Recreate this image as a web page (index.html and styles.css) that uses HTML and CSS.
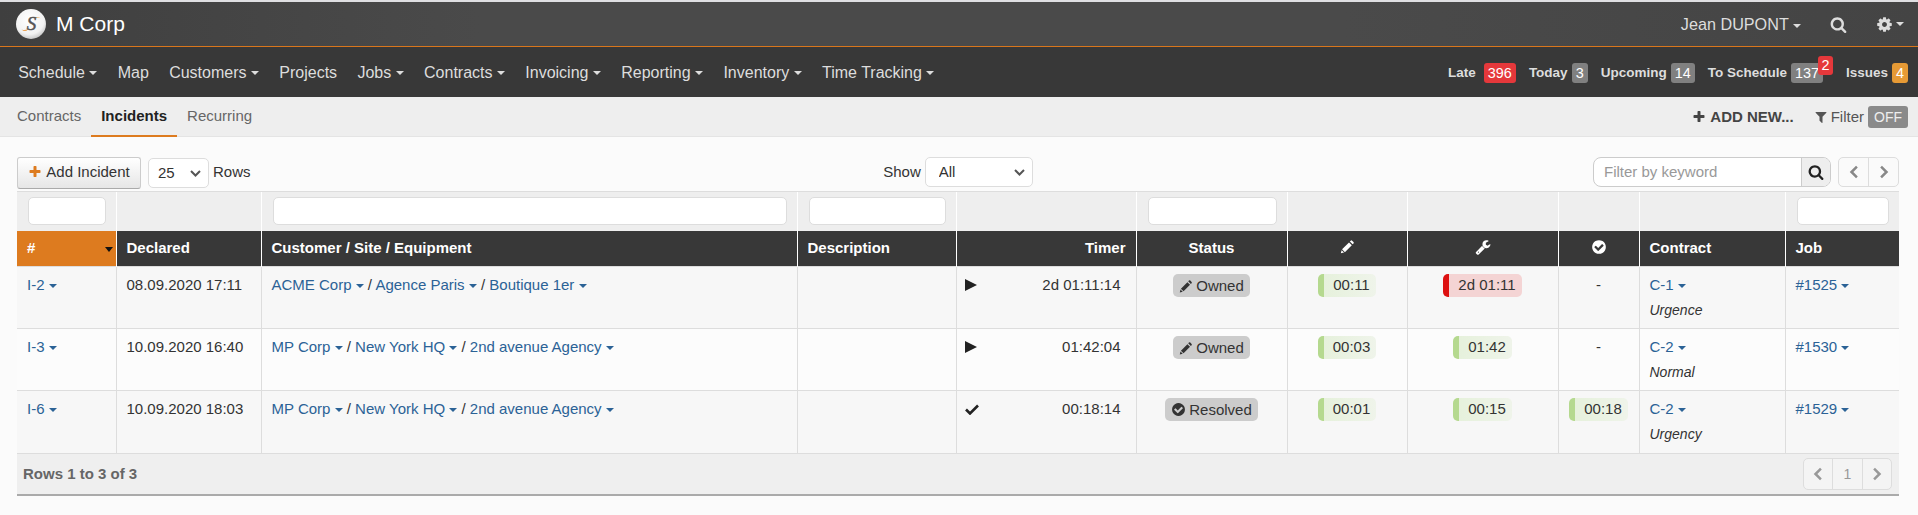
FILE: index.html
```html
<!DOCTYPE html>
<html lang="en">
<head>
<meta charset="utf-8">
<title>Incidents</title>
<link rel="stylesheet" href="styles.css">
</head>
<body>
<svg class="sprite" width="0" height="0" aria-hidden="true">
  <symbol id="i-search" viewBox="0 0 1792 1792"><path d="M1216 832q0-185-131.500-316.500t-316.500-131.500-316.500 131.500-131.500 316.500 131.500 316.500 316.500 131.500 316.500-131.500 131.500-316.500zm512 832q0 52-38 90t-90 38q-54 0-90-38l-343-342q-179 124-399 124-143 0-273.500-55.500t-225-150-150-225-55.500-273.500 55.500-273.500 150-225 225-150 273.500-55.500 273.500 55.500 225 150 150 225 55.500 273.500q0 220-124 399l343 343q37 37 37 90z"/></symbol>
  <symbol id="i-cog" viewBox="0 0 1792 1792"><path d="M1152 896q0-106-75-181t-181-75-181 75-75 181 75 181 181 75 181-75 75-181zm512-109v222q0 12-8 23t-20 13l-185 28q-19 54-39 91 35 50 107 138 10 12 10 25t-9 23q-27 37-99 108t-94 71q-12 0-26-9l-138-108q-44 23-91 38-16 136-29 186-7 28-36 28h-222q-14 0-24.500-8.500t-11.500-21.500l-28-184q-49-16-90-37l-141 107q-10 9-25 9-14 0-25-11-126-114-165-168-7-10-7-23 0-12 8-23 15-21 51-66.500t54-70.500q-27-50-41-99l-183-27q-13-2-21-12.500t-8-23.500v-222q0-12 8-23t19-13l186-28q14-46 39-92-40-57-107-138-10-12-10-24 0-10 9-23 26-36 98.500-107.500t94.500-71.500q13 0 26 10l138 107q44-23 91-38 16-136 29-186 7-28 36-28h222q14 0 24.500 8.500t11.500 21.500l28 184q49 16 90 37l142-107q9-9 24-9 13 0 25 10 129 119 165 170 7 8 7 22 0 12-8 23-15 21-51 66.500t-54 70.500q26 50 41 98l183 28q13 2 21 12.500t8 23.500z"/></symbol>
  <symbol id="i-pencil" viewBox="0 0 16 16"><path d="M9.600 3.600l3 3-7.400 7.400-3-3zM10.500 2.700l.9-.9a1.100 1.100 0 0 1 1.500 0l1.500 1.500a1.100 1.100 0 0 1 0 1.500l-.9.900zM1.700 11.900l2.600 2.600-3.400.8z"/></symbol>
  <symbol id="i-wrench" viewBox="0 0 1792 1792"><path d="M448 1472q0-26-19-45t-45-19-45 19-19 45 19 45 45 19 45-19 19-45zm644-420l-682 682q-37 37-90 37-52 0-91-37l-106-108q-38-36-38-90 0-53 38-91l681-681q39 98 114.500 173.500t173.500 114.500zm634-435q0 39-23 106-47 134-164.500 217.500t-258.500 83.500q-185 0-316.500-131.500t-131.500-316.500 131.500-316.500 316.500-131.500q58 0 121.500 16.500t107.500 46.500q16 11 16 28t-16 28l-293 169v224l193 107q5-3 79-48.500t135.500-81 70.500-35.500q15 0 23.500 10t8.500 25z"/></symbol>
  <symbol id="i-check" viewBox="0 0 1792 1792"><path d="M1412 734q0-28-18-46l-91-90q-19-19-45-19t-45 19l-408 407-226-226q-19-19-45-19t-45 19l-91 90q-18 18-18 46 0 27 18 45l362 362q19 19 45 19 27 0 46-19l543-543q18-18 18-45zm252 162q0 209-103 385.500t-279.500 279.500-385.500 103-385.500-103-279.500-279.500-103-385.500 103-385.500 279.500-279.500 385.500-103 385.500 103 279.500 279.500 103 385.500z"/></symbol>
  <symbol id="i-plus" viewBox="0 0 1792 1792"><path d="M1600 736v192q0 40-28 68t-68 28h-416v416q0 40-28 68t-68 28h-192q-40 0-68-28t-28-68v-416h-416q-40 0-68-28t-28-68v-192q0-40 28-68t68-28h416v-416q0-40 28-68t68-28h192q40 0 68 28t28 68v416h416q40 0 68 28t28 68z"/></symbol>
  <symbol id="i-filter" viewBox="0 0 1792 1792"><path d="M1595 295q17 41-14 70l-493 493v742q0 42-39 59-13 5-25 5-27 0-45-19l-256-256q-19-19-19-45v-486l-493-493q-31-29-14-70 17-39 59-39h1280q42 0 59 39z"/></symbol>
  <symbol id="i-left" viewBox="0 0 12 16"><path d="M9.500 1.500 3 8l6.500 6.500" fill="none" stroke="currentColor" stroke-width="3"/></symbol>
  <symbol id="i-right" viewBox="0 0 12 16"><path d="M2.500 1.500 9 8l-6.500 6.500" fill="none" stroke="currentColor" stroke-width="3"/></symbol>
  <symbol id="i-play" viewBox="0 0 12 12"><path d="M0 0l12 6-12 6z"/></symbol>
  <symbol id="i-ok" viewBox="0 0 14 12"><path d="M1 6.500l4 4 8-8" fill="none" stroke="currentColor" stroke-width="2.600"/></symbol>
</svg>

<header class="topbar">
  <div class="brand">
    <svg class="logo" viewBox="0 0 30 30" aria-hidden="true">
      <defs><radialGradient id="lg" cx="45%" cy="35%" r="70%"><stop offset="0" stop-color="#fff"/><stop offset=".7" stop-color="#f2f2f2"/><stop offset="1" stop-color="#bcbcbc"/></radialGradient></defs>
      <circle cx="15" cy="15" r="15" fill="url(#lg)"/>
      <path d="M5.500 20.500c2.500 1 4.500.6 7-.6-1.800 2.300-4.800 2.700-7 .6z" fill="#e8871e"/>
      <path d="M24.500 9.200c-2-.6-4-.5-6 .2 1.800-1.400 4.500-1.500 6-.2z" fill="#e8871e"/>
      <text x="15.500" y="20.500" class="logo-s">S</text>
    </svg>
    <span class="brand-name">M Corp</span>
  </div>
  <div class="top-right">
    <span class="user">Jean DUPONT <i class="caret"></i></span>
    <svg class="ico ico-top"><use href="#i-search"/></svg>
    <span class="gear"><svg class="ico ico-top"><use href="#i-cog"/></svg><i class="caret"></i></span>
  </div>
</header>

<nav class="mainnav">
  <ul class="menu">
    <li>Schedule <i class="caret"></i></li>
    <li>Map</li>
    <li>Customers <i class="caret"></i></li>
    <li>Projects</li>
    <li>Jobs <i class="caret"></i></li>
    <li>Contracts <i class="caret"></i></li>
    <li>Invoicing <i class="caret"></i></li>
    <li>Reporting <i class="caret"></i></li>
    <li>Inventory <i class="caret"></i></li>
    <li>Time Tracking <i class="caret"></i></li>
  </ul>
  <div class="counters">
    <span class="counter counter-late">Late <b class="badge badge-red">396</b></span>
    <span class="counter">Today <b class="badge">3</b></span>
    <span class="counter">Upcoming <b class="badge">14</b></span>
    <span class="counter">To Schedule <b class="badge">137<em class="badge-over">2</em></b></span>
    <span class="counter counter-issues">Issues <b class="badge badge-orange">4</b></span>
  </div>
</nav>

<div class="subnav">
  <div class="tabs">
    <a class="tab">Contracts</a>
    <a class="tab tab-active">Incidents</a>
    <a class="tab">Recurring</a>
  </div>
  <div class="subnav-right">
    <span class="addnew"><svg class="ico ico-plus"><use href="#i-plus"/></svg>ADD NEW...</span>
    <span class="filter"><svg class="ico ico-filter"><use href="#i-filter"/></svg>Filter</span>
    <span class="off">OFF</span>
  </div>
</div>

<main class="content">
  <div class="toolbar">
    <div class="tb-left">
      <button class="btn-add" type="button"><svg class="ico ico-add"><use href="#i-plus"/></svg>Add Incident</button>
      <select class="sel sel-rows"><option>25</option></select>
      <span class="tb-label">Rows</span>
    </div>
    <div class="tb-mid">
      <span class="tb-label">Show</span>
      <select class="sel sel-show"><option>All</option></select>
    </div>
    <div class="tb-right">
      <div class="search">
        <input class="search-input" placeholder="Filter by keyword">
        <span class="search-btn"><svg class="ico ico-sb"><use href="#i-search"/></svg></span>
      </div>
      <div class="pager pager-top">
        <span class="pg"><svg class="ico ico-chev"><use href="#i-left"/></svg></span>
        <span class="pg"><svg class="ico ico-chev"><use href="#i-right"/></svg></span>
      </div>
    </div>
  </div>

  <table class="grid">
    <colgroup>
      <col class="c1"><col class="c2"><col class="c3"><col class="c4"><col class="c5"><col class="c6"><col class="c7"><col class="c8"><col class="c9"><col class="c10"><col class="c11">
    </colgroup>
    <thead>
      <tr class="filters">
        <td><input class="fi"></td><td></td><td><input class="fi"></td><td><input class="fi"></td><td></td><td><input class="fi"></td><td></td><td></td><td></td><td></td><td><input class="fi"></td>
      </tr>
      <tr class="heads">
        <th class="sorted">#<i class="sort-caret"></i></th>
        <th>Declared</th>
        <th>Customer / Site / Equipment</th>
        <th>Description</th>
        <th class="ar">Timer</th>
        <th class="ac">Status</th>
        <th class="ac"><svg class="ico ico-th-p"><use href="#i-pencil"/></svg></th>
        <th class="ac"><svg class="ico ico-th"><use href="#i-wrench"/></svg></th>
        <th class="ac"><svg class="ico ico-th"><use href="#i-check"/></svg></th>
        <th>Contract</th>
        <th>Job</th>
      </tr>
    </thead>
    <tbody>
      <tr class="odd">
        <td><a class="lnk">I-2 <i class="caret"></i></a></td>
        <td>08.09.2020 17:11</td>
        <td><a class="lnk">ACME Corp <i class="caret"></i></a> / <a class="lnk">Agence Paris <i class="caret"></i></a> / <a class="lnk">Boutique 1er <i class="caret"></i></a></td>
        <td></td>
        <td class="timer"><div class="timer-in"><svg class="ico ico-play"><use href="#i-play"/></svg><span>2d 01:11:14</span></div></td>
        <td class="ac"><span class="status"><svg class="ico ico-st"><use href="#i-pencil"/></svg>Owned</span></td>
        <td class="ac"><span class="tm">00:11</span></td>
        <td class="ac"><span class="tm tm-red">2d 01:11</span></td>
        <td class="ac">-</td>
        <td><a class="lnk">C-1 <i class="caret"></i></a><div class="prio">Urgence</div></td>
        <td><a class="lnk">#1525 <i class="caret"></i></a></td>
      </tr>
      <tr class="even">
        <td><a class="lnk">I-3 <i class="caret"></i></a></td>
        <td>10.09.2020 16:40</td>
        <td><a class="lnk">MP Corp <i class="caret"></i></a> / <a class="lnk">New York HQ <i class="caret"></i></a> / <a class="lnk">2nd avenue Agency <i class="caret"></i></a></td>
        <td></td>
        <td class="timer"><div class="timer-in"><svg class="ico ico-play"><use href="#i-play"/></svg><span>01:42:04</span></div></td>
        <td class="ac"><span class="status"><svg class="ico ico-st"><use href="#i-pencil"/></svg>Owned</span></td>
        <td class="ac"><span class="tm">00:03</span></td>
        <td class="ac"><span class="tm">01:42</span></td>
        <td class="ac">-</td>
        <td><a class="lnk">C-2 <i class="caret"></i></a><div class="prio">Normal</div></td>
        <td><a class="lnk">#1530 <i class="caret"></i></a></td>
      </tr>
      <tr class="odd">
        <td><a class="lnk">I-6 <i class="caret"></i></a></td>
        <td>10.09.2020 18:03</td>
        <td><a class="lnk">MP Corp <i class="caret"></i></a> / <a class="lnk">New York HQ <i class="caret"></i></a> / <a class="lnk">2nd avenue Agency <i class="caret"></i></a></td>
        <td></td>
        <td class="timer"><div class="timer-in"><svg class="ico ico-ok"><use href="#i-ok"/></svg><span>00:18:14</span></div></td>
        <td class="ac"><span class="status"><svg class="ico ico-st2"><use href="#i-check"/></svg>Resolved</span></td>
        <td class="ac"><span class="tm">00:01</span></td>
        <td class="ac"><span class="tm">00:15</span></td>
        <td class="ac"><span class="tm">00:18</span></td>
        <td><a class="lnk">C-2 <i class="caret"></i></a><div class="prio">Urgency</div></td>
        <td><a class="lnk">#1529 <i class="caret"></i></a></td>
      </tr>
    </tbody>
  </table>

  <div class="tfoot">
    <span class="rows-info">Rows 1 to 3 of 3</span>
    <div class="pager pager-bottom">
      <span class="pg pg-b"><svg class="ico ico-chev"><use href="#i-left"/></svg></span>
      <span class="pg pg-b pg-num">1</span>
      <span class="pg pg-b"><svg class="ico ico-chev"><use href="#i-right"/></svg></span>
    </div>
  </div>
</main>
</body>
</html>
```

FILE: styles.css
```css
* { box-sizing: border-box; }
html, body { margin: 0; padding: 0; }
body {
  background: #fbfbfb;
  color: #333;
  font: 15px/20px "Liberation Sans", Arial, sans-serif;
  border-top: 2px solid #dfdfe2;
  overflow: hidden;
}
.sprite { position: absolute; }
.ico { display: inline-block; fill: currentColor; flex: none; }
.caret {
  display: inline-block;
  width: 0; height: 0;
  vertical-align: middle;
  border-top: 4px solid currentColor;
  border-left: 4px solid transparent;
  border-right: 4px solid transparent;
}

/* top bar */
.topbar {
  height: 45px;
  display: flex;
  align-items: center;
  justify-content: space-between;
  padding: 0 14px 0 16px;
  background: linear-gradient(90deg, #3f3f3f, #4a4a4a 25%, #4a4a4a 70%, #444);
  border-bottom: 1px solid #d9761c;
}
.brand { display: flex; align-items: center; gap: 10px; }
.logo { width: 30px; height: 30px; display: block; }
.logo-s { font: italic 19px "Liberation Serif", serif; fill: #555; text-anchor: middle; stroke: #555; stroke-width: .5px; }
.brand-name { font-size: 21px; color: #fff; }
.top-right { display: flex; align-items: center; color: #ddd; font-size: 16.200px; }
.user { margin-right: 29px; }
.ico-top { width: 17px; height: 17px; }
.gear { display: flex; align-items: center; gap: 3px; margin-left: 29px; }

/* main nav */
.mainnav {
  height: 50px;
  display: flex;
  align-items: center;
  justify-content: space-between;
  background: #383838;
  padding: 1px 10px 0 8px;
}
.menu { display: flex; list-style: none; margin: 0; padding: 0; color: #ddd; font-size: 16px; }
.menu li { padding: 0 10.180px; }
.counters { display: flex; gap: 13px; color: #ddd; font-weight: bold; font-size: 13.500px; }
.counter { display: flex; align-items: center; gap: 4px; }
.counter-late { gap: 8px; }
.counter-issues { margin-left: 10px; }
.badge {
  position: relative;
  display: block;
  height: 20px;
  line-height: 20px;
  padding: 0 4px;
  border-radius: 3px;
  background: #808080;
  color: #fff;
  font-weight: normal;
  font-size: 14.400px;
}
.badge-red { background: #e5383b; }
.badge-orange { background: #e69a35; }
.badge-over {
  position: absolute;
  top: -7px;
  right: -10px;
  height: 19px;
  width: 15px;
  text-align: center;
  line-height: 18px;
  border-radius: 3px;
  background: #e5383b;
  font-style: normal;
}

/* sub nav */
.subnav {
  height: 40px;
  display: flex;
  justify-content: space-between;
  background: #eee;
  border-bottom: 1px solid #e4e4e4;
  padding: 0 10px 0 7px;
}
.tabs { display: flex; }
.tab { padding: 0 10px; line-height: 37px; color: #666; height: 40px; }
.tab-active { color: #222; font-weight: bold; border-bottom: 2px solid #dd7b1f; }
.subnav-right { display: flex; align-items: center; color: #555; }
.addnew { display: flex; align-items: center; gap: 4px; font-weight: bold; margin-right: 20px; color: #444; }
.ico-plus { width: 14px; height: 14px; }
.filter { display: flex; align-items: center; gap: 3px; margin-right: 4px; }
.ico-filter { width: 14px; height: 14px; }
.off {
  width: 40px; height: 22px; line-height: 22px;
  text-align: center;
  background: #8a8a8a;
  color: #eee;
  border-radius: 3px;
  font-size: 14px;
}

/* content */
.content { margin: 0 19px 0 17px; }
.toolbar {
  height: 54px;
  padding-top: 20px;
  display: grid;
  grid-template-columns: 1fr auto 1fr;
}
.tb-left, .tb-mid, .tb-right { display: flex; align-items: flex-start; }
.tb-left { gap: 4px; }
.tb-right { justify-content: flex-end; gap: 7px; }
.tb-mid { gap: 4px; }
.tb-label { line-height: 30px; color: #333; }
.btn-add {
  height: 32px;
  width: 124px;
  margin-right: 3px;
  display: flex;
  align-items: center;
  justify-content: center;
  gap: 4px;
  padding: 0 0 2px;
  font: inherit;
  color: #333;
  border: 1px solid #ccc;
  border-bottom-color: #aaa;
  border-radius: 3px;
  background: linear-gradient(#fff, #e6e6e6);
}
.ico-add { width: 14px; height: 14px; color: #dd7b1f; }
.sel {
  appearance: none;
  -webkit-appearance: none;
  height: 30px;
  font: inherit;
  color: #333;
  border: 1px solid #ddd;
  border-radius: 5px;
  padding: 0 0 0 9px;
  background: #fff url("data:image/svg+xml,%3Csvg xmlns='http://www.w3.org/2000/svg' width='11' height='7'%3E%3Cpath d='M1 1l4.500 4.500L10 1' fill='none' stroke='%23555' stroke-width='2'/%3E%3C/svg%3E") no-repeat right 7px center;
}
.sel-rows { width: 61px; margin-top: 1px; }
.sel-show { width: 108px; padding-left: 13px; }
.search {
  display: flex;
  width: 238px;
  height: 30px;
  border: 1px solid #ccc;
  border-radius: 8px;
  overflow: hidden;
  background: #fff;
}
.search-input {
  flex: 1;
  min-width: 0;
  border: 0;
  outline: 0;
  padding: 0 0 0 10px;
  font: inherit;
  background: transparent;
}
.search-input::placeholder { color: #999; opacity: 1; }
.search-btn {
  width: 29px;
  display: flex;
  align-items: center;
  justify-content: center;
  background: #eee;
  border-left: 1px solid #ccc;
  color: #222;
}
.ico-sb { width: 16px; height: 16px; }
.pager { display: flex; border: 1px solid #ddd; border-radius: 5px; color: #888; }
.pager-top { height: 30px; width: 61px; background: #fafafa; }
.pg { flex: 1; display: flex; align-items: center; justify-content: center; }
.pg + .pg { border-left: 1px solid #ddd; }
.ico-chev { width: 10px; height: 14px; }

/* table */
.grid { width: 1882px; border-collapse: collapse; table-layout: fixed; }
.c1 { width: 99px; } .c2 { width: 145px; } .c3 { width: 536px; } .c4 { width: 159px; }
.c5 { width: 180px; } .c6 { width: 151px; } .c7 { width: 120px; } .c8 { width: 151px; }
.c9 { width: 81px; } .c10 { width: 146px; } .c11 { width: 114px; }
.filters td {
  height: 39px;
  padding: 5px 10px 5px 11px;
  background: #eee;
  border-top: 1px solid #ddd;
  border-left: 1px solid #fff;
}
.filters td:first-child { border-left: 0; }
.fi {
  display: block;
  width: 100%;
  height: 28px;
  border: 1px solid #ddd;
  border-radius: 5px;
  background: #fff;
}
.heads th {
  height: 36px;
  padding: 0 10px;
  background: #383838;
  color: #fff;
  text-align: left;
  font-weight: bold;
  border-left: 1px solid #fff;
}
.heads th:first-child { border-left: 0; }
.heads th.sorted { position: relative; background: #dd7b1f; }
.sort-caret {
  position: absolute;
  right: 3px;
  top: 16px;
  border-top: 5px solid #111;
  border-left: 4px solid transparent;
  border-right: 4px solid transparent;
}
.heads th.ar { text-align: right; }
.heads th.ac { text-align: center; }
.ico-th { width: 16px; height: 16px; vertical-align: -2px; }
.ico-th-p { width: 15px; height: 15px; vertical-align: -1px; }
tbody td {
  height: 62px;
  padding: 7px 10px 0;
  vertical-align: top;
  border-left: 1px solid #ddd;
  border-top: 1px solid #ddd;
  line-height: 22px;
  color: #333;
}
tbody td:first-child { border-left: 0; }
.odd td { background: #f7f7f7; }
.even td { background: #fcfcfc; }
td.ac { text-align: center; }
.lnk { color: #2b6296; }
.prio { font-style: italic; font-size: 14px; line-height: 20px; margin-top: 4px; color: #333; }
td.timer { padding: 7px 15px 0 8px; }
.timer-in { display: flex; justify-content: space-between; align-items: center; }
.ico-play { width: 12px; height: 12px; color: #222; }
.ico-ok { width: 14px; height: 12px; color: #222; }
.status {
  display: inline-flex;
  align-items: center;
  gap: 3px;
  height: 23px;
  padding: 0 6px;
  border-radius: 5px;
  background: #ccc;
}
.ico-st { width: 14px; height: 14px; color: #333; }
.ico-st2 { width: 15px; height: 15px; color: #333; }
.tm {
  display: inline-block;
  height: 23px;
  line-height: 22px;
  padding: 0 6px 0 9px;
  border-left: 6px solid #b5d98f;
  border-radius: 5px;
  background: linear-gradient(90deg, #e6f1dc, #eff4ea);
}
.tm-red { border-left-color: #dd1111; background: #f4d4d4; }

/* footer */
.tfoot {
  width: 1882px;
  height: 43px;
  display: flex;
  align-items: center;
  justify-content: space-between;
  padding: 0 7px 0 6px;
  background: #efefef;
  border-top: 1px solid #ddd;
  border-bottom: 2px solid #aaa;
}
.rows-info { font-weight: bold; color: #666; }
.pager-bottom { width: 89px; height: 32px; background: #f4f4f4; border-color: #ddd; color: #999; }
.pg-num { font-size: 14px; }
```
